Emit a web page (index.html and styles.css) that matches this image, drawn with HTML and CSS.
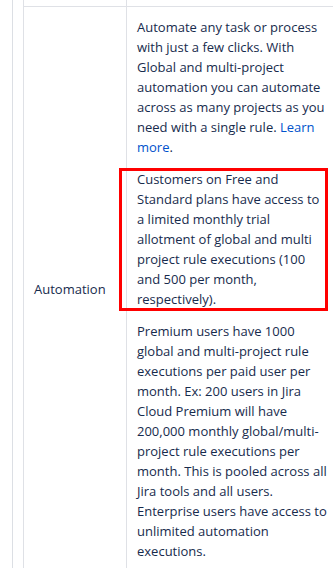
FILE: index.html
```html
<!DOCTYPE html>
<html>
<head>
    <meta name="viewport" content="width=device-width, initial-scale=1">
    <title>Automation</title>
    <link rel="stylesheet" href="styles.css">
</head>
<body>
    <div class="page">
        <table class="plans">
            <colgroup>
                <col class="col-feature">
                <col class="col-details">
            </colgroup>
            <tr class="tail">
                <td></td>
                <td></td>
            </tr>
            <tr>
                <td class="feature">Automation</td>
                <td class="details">
                    <p>Automate any task or process with just a few clicks. With Global and multi-project automation you can automate across as many projects as you need with a single rule. <a href="#">Learn more</a>.</p>
                    <p class="marked">Customers on Free and Standard plans have access to a limited monthly trial allotment of global and multi project rule executions (100 and 500 per month, respectively).</p>
                    <p>Premium users have 1000 global and multi-project rule executions per paid user per month. Ex: 200 users in Jira Cloud Premium will have 200,000 monthly global/multi-project rule executions per month. This is pooled across all Jira tools and all users. Enterprise users have access to unlimited automation executions.</p>
                </td>
            </tr>
        </table>
    </div>
</body>
</html>
```
FILE: styles.css
```css
body {
    margin: 0;
    padding: 0;
    background-color: #fff;
    font-family: "Open Sans", Arial, sans-serif;
    font-size: 13px;
    line-height: 20px;
    color: #172b4d;
    overflow: hidden;
}

.page {
    margin-left: 12px;
    padding-left: 10px;
    border-left: 1px solid #dcdfe4;
    overflow: hidden;
}

.plans {
    border-collapse: collapse;
    table-layout: fixed;
    width: 316px;
}

.col-feature {
    width: 103px;
}

.plans td {
    border: 1px solid #dfe1e6;
    padding: 10px;
}

.plans .tail td {
    border-top: none;
    height: 6px;
    padding: 0;
}

.feature {
    vertical-align: middle;
}

.details {
    vertical-align: top;
}

.details p {
    margin: 12px 0 0;
}

.details p:first-child {
    margin-top: 0;
}

.details a {
    color: #0052cc;
    text-decoration: none;
}

.marked {
    position: relative;
}

.marked::after {
    content: "";
    position: absolute;
    left: -18px;
    right: 0;
    top: -1px;
    bottom: -2px;
    border: 3px solid #f00;
}
```
